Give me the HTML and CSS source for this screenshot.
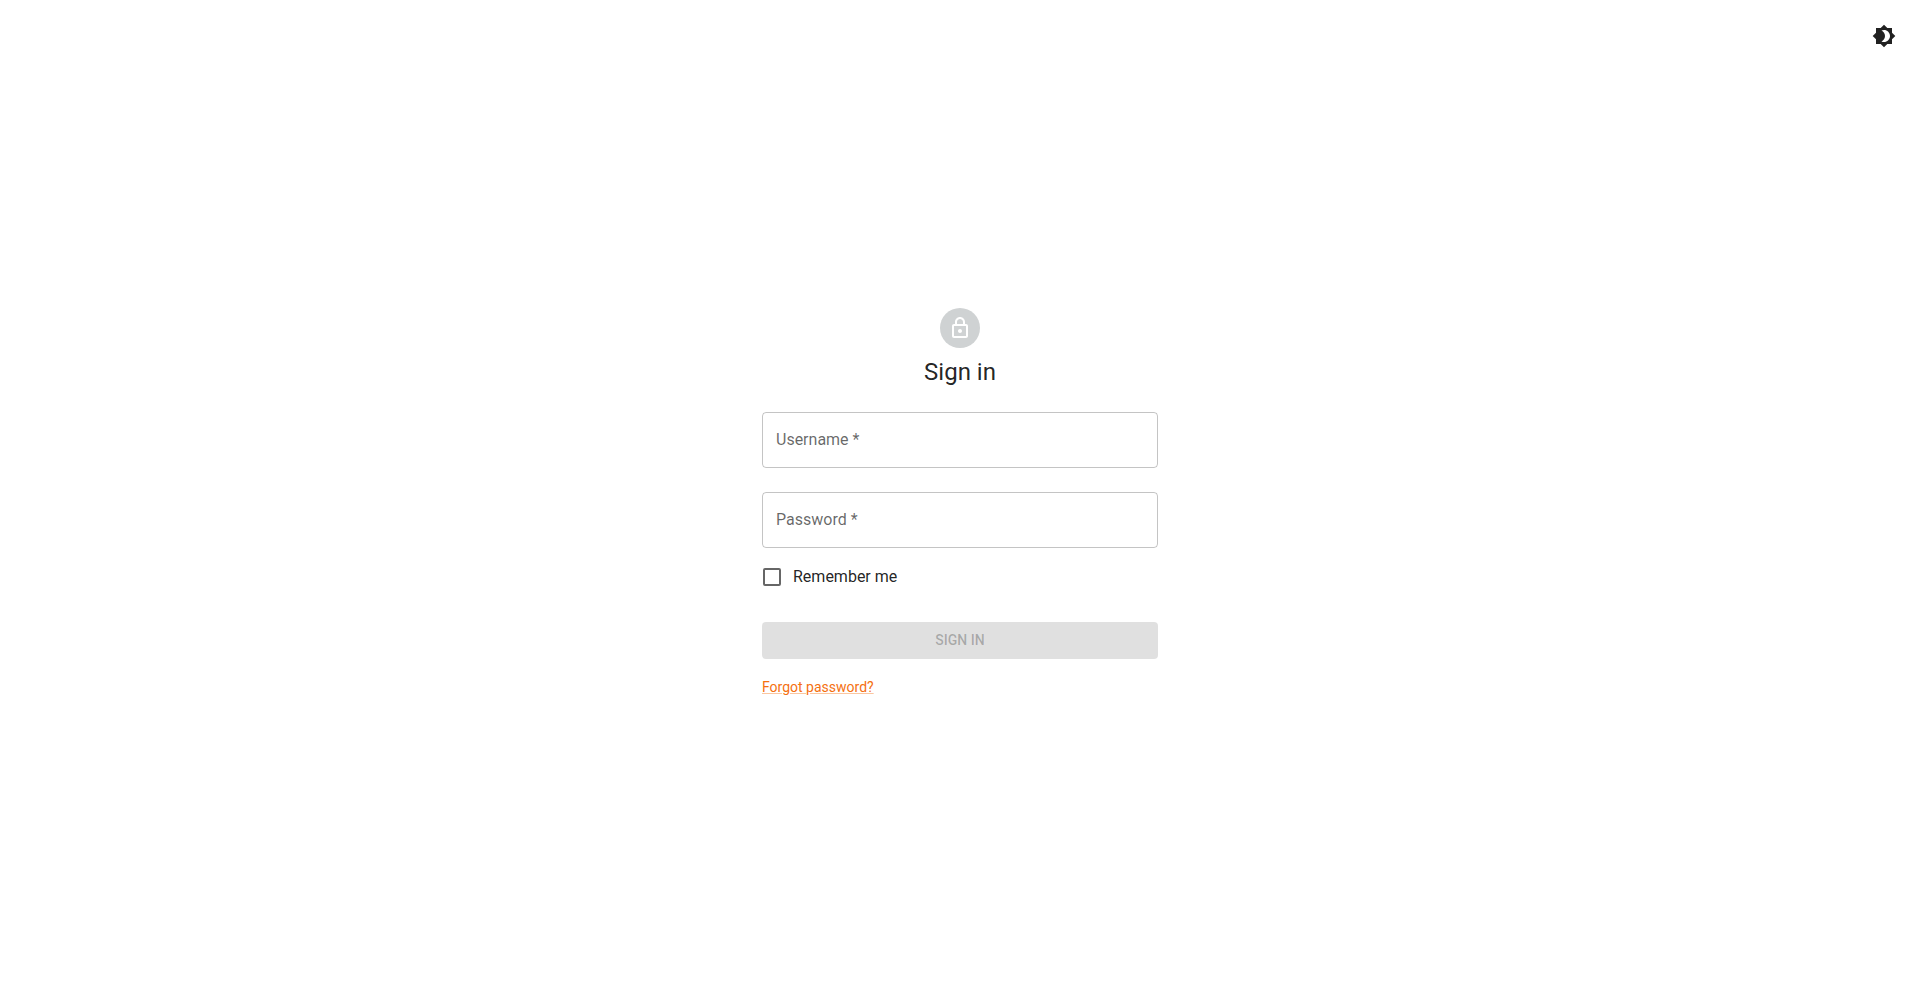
FILE: index.html
```html
<!DOCTYPE html>
<html lang="en">
<head>
<meta charset="utf-8">
<meta name="viewport" content="width=device-width, initial-scale=1">
<title>Sign in</title>
<link rel="stylesheet" href="styles.css">
</head>
<body>
<button class="theme-toggle" type="button" aria-label="Toggle dark mode">
  <svg class="icon" viewBox="0 0 24 24" aria-hidden="true"><path d="M20 8.69V4h-4.69L12 .69 8.69 4H4v4.69L.69 12 4 15.31V20h4.69L12 23.31 15.31 20H20v-4.69L23.31 12 20 8.69zM12 18c-.89 0-1.74-.2-2.5-.55C11.56 16.5 13 14.42 13 12s-1.44-4.5-3.5-5.45C10.26 6.2 11.11 6 12 6c3.31 0 6 2.69 6 6s-2.69 6-6 6z"/></svg>
</button>
<main class="page">
  <div class="panel">
    <div class="avatar">
      <svg class="icon" viewBox="0 0 24 24" aria-hidden="true"><path d="M18 8h-1V6c0-2.76-2.24-5-5-5S7 3.240 7 6v2H6c-1.100 0-2 .9-2 2v10c0 1.100.9 2 2 2h12c1.100 0 2-.9 2-2V10c0-1.100-.9-2-2-2zM9 6c0-1.660 1.340-3 3-3s3 1.340 3 3v2H9V6zm9 14H6V10h12v10zm-6-3c1.100 0 2-.9 2-2s-.9-2-2-2-2 .9-2 2 .9 2 2 2z"/></svg>
    </div>
    <h1 class="title">Sign in</h1>
    <form class="form">
      <div class="field">
        <input class="field-input" id="username" type="text" placeholder=" " autocomplete="username" required>
        <label class="field-label" for="username">Username *</label>
      </div>
      <div class="field">
        <input class="field-input" id="password" type="password" placeholder=" " autocomplete="current-password" required>
        <label class="field-label" for="password">Password *</label>
      </div>
      <label class="remember" for="remember">
        <input class="checkbox" id="remember" type="checkbox">
        Remember me
      </label>
      <button class="submit" type="submit" disabled>SIGN IN</button>
      <a class="forgot" href="#">Forgot password?</a>
    </form>
  </div>
</main>
</body>
</html>
```
FILE: styles.css
```css
* {
  box-sizing: border-box;
}

body {
  margin: 0;
  background: #fff;
  color: rgba(0, 0, 0, 0.87);
  font-family: Roboto, "Liberation Sans", sans-serif;
  font-size: 16px;
  line-height: 24px;
}

.icon {
  display: block;
  width: 24px;
  height: 24px;
  fill: currentColor;
}

.theme-toggle {
  position: absolute;
  top: 16px;
  right: 15px;
  padding: 8px;
  border: 0;
  border-radius: 50%;
  background: none;
  color: rgba(0, 0, 0, 0.87);
  cursor: pointer;
}

.page {
  display: flex;
  align-items: center;
  justify-content: center;
  min-height: 100vh;
  padding: 0 24px 0 25px;
}

.panel {
  display: flex;
  flex-direction: column;
  align-items: center;
  width: 100%;
  max-width: 396px;
}

.avatar {
  display: grid;
  place-items: center;
  width: 40px;
  height: 40px;
  margin: 8px;
  border-radius: 50%;
  background: #cfd2d3;
  color: #fff;
}

.title {
  margin: 0;
  font-size: 24px;
  font-weight: 400;
  line-height: 32px;
}

.form {
  display: flex;
  flex-direction: column;
  width: 100%;
  padding-top: 24px;
}

.field {
  position: relative;
  margin-bottom: 24px;
}

.field + .remember {
  margin-top: -16px;
}

.field-input {
  display: block;
  width: 100%;
  height: 56px;
  padding: 16px 14px;
  border: 1px solid rgba(0, 0, 0, 0.23);
  border-radius: 4px;
  background: none;
  color: inherit;
  font: inherit;
}

.field-label {
  position: absolute;
  top: 16px;
  left: 14px;
  color: rgba(0, 0, 0, 0.6);
  pointer-events: none;
}

.field-input:not(:placeholder-shown) + .field-label {
  top: -12px;
  padding: 0 4px;
  background: #fff;
  font-size: 12px;
}

.remember {
  display: flex;
  align-items: center;
  align-self: flex-start;
  gap: 12px;
  height: 42px;
  padding-left: 1px;
  cursor: pointer;
}

.checkbox {
  appearance: none;
  width: 18px;
  height: 18px;
  margin: 0;
  border: 2px solid rgba(0, 0, 0, 0.6);
  border-radius: 2px;
}

.checkbox:checked {
  background: #f57010;
  border-color: #f57010;
}

.submit {
  margin: 24px 0 16px;
  padding: 6px 16px;
  border: 0;
  border-radius: 4px;
  background: rgba(0, 0, 0, 0.12);
  color: rgba(0, 0, 0, 0.26);
  font: inherit;
  font-size: 14px;
  font-weight: 500;
  line-height: 25px;
}

.forgot {
  align-self: flex-start;
  color: #f57010;
  font-size: 14px;
  text-decoration-color: rgba(245, 112, 16, 0.4);
}
```
